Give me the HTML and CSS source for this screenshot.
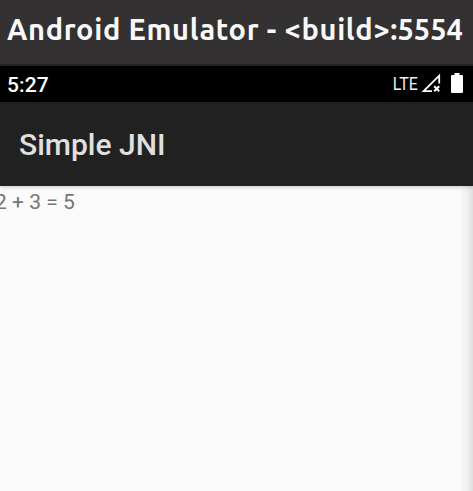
FILE: index.html
```html
<!DOCTYPE html>
<html lang="en"><head><meta charset="utf-8"><title>Android Emulator</title><link rel="stylesheet" href="styles.css"></head>
<body>
<header class="titlebar"><span class="window-title">Android Emulator - &lt;build&gt;<span class="port">:5554</span></span></header>
<div class="screen">
<div class="status"><span class="clock">5:27</span><div class="icons"><span class="lte">LTE</span>
<svg class="signal" width="20" height="20" viewBox="0 0 20 20"><path d="M11 18.2H2.6L18.2 2.6V10.5" fill="none" stroke="#fff" stroke-width="1.8"/><path d="M13.2 13.2l5 5m0-5l-5 5" stroke="#fff" stroke-width="2"/></svg>
<svg class="battery" width="12" height="20" viewBox="0 0 12 20"><path d="M3.5 0h5v2H11q1 0 1 1v16q0 1-1 1H1q-1 0-1-1V3q0-1 1-1h2.5z" fill="#fff"/></svg></div></div>
<div class="appbar"><h1 class="app-title">Simple JNI</h1></div>
<main class="content"><p class="result">2 + 3 = 5</p></main>
</div>
</body></html>
```
FILE: styles.css
```css
* { box-sizing: border-box; }
body { margin: 0; width: 473px; height: 491px; overflow: hidden; display: flex; flex-direction: column; background: #fafafa; font-family: Roboto, sans-serif; }
.titlebar { height: 66px; flex: none; background: #333132; border-bottom: 2px solid #222; padding: 9px 0 0 7px; color: #f8f8f8; white-space: nowrap; }
.window-title { font: bold 29px/40px Ubuntu, "Noto Sans", sans-serif; letter-spacing: 0.66px; display: inline-block; }
.port { letter-spacing: 0; }
.screen { flex: 1; display: flex; flex-direction: column; }
.status { height: 36px; flex: none; background: #000; color: #fff; display: flex; justify-content: space-between; align-items: center; padding: 0 10px 0 7px; }
.clock { font-size: 21px; font-weight: 500; letter-spacing: 0.1px; padding-top: 1px; }
.icons { display: flex; align-items: center; padding-bottom: 2px; }
.lte { font-size: 19px; line-height: 20px; padding-top: 2px; color: #eee; transform: scaleX(0.84); transform-origin: right; }
.signal { margin-left: 3px; }
.battery { margin-left: 10px; }
.appbar { height: 84px; flex: none; background: #212121; display: flex; align-items: center; padding-left: 19px; z-index: 1; box-shadow: 0 1px 4px #0003; }
.app-title { margin: 0; font-size: 30px; font-weight: 500; color: #e0e0e0; }
.content { flex: 1; background: linear-gradient(to left, #dedede, #ededed 5px, #fafafa 13px); }
.result { margin: 4px 0 0 -5px; font-size: 21px; line-height: 25px; color: #757575; }
```
